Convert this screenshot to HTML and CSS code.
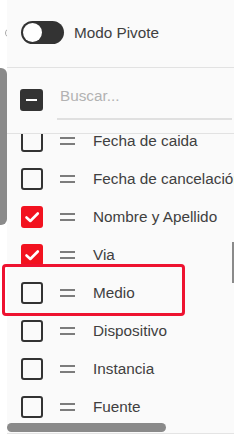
FILE: index.html
```html
<!DOCTYPE html>
<html lang="es">
<head>
<meta charset="utf-8">
<title>Columnas</title>
<link rel="stylesheet" href="styles.css">
</head>
<body>
<div class="rail">
  <div class="rail-dot"></div>
  <div class="rail-thumb"></div>
</div>
<div class="panel">
  <div class="toggle-row">
    <div class="toggle"><div class="knob"></div></div>
    <span class="toggle-label">Modo Pivote</span>
  </div>
  <div class="search-row">
    <div class="cb cb-ind"><div class="dash"></div></div>
    <div class="search">Buscar...</div>
  </div>
  <div class="list">
    <div class="list-inner">
      <div class="row"><div class="cb"></div><div class="handle"></div><span class="label">Fecha de caida</span></div>
      <div class="row"><div class="cb"></div><div class="handle"></div><span class="label">Fecha de cancelación</span></div>
      <div class="row"><div class="cb cb-on"><svg viewBox="0 0 22 22" width="22" height="22"><path d="M5.5 11.5 L9.3 15 L16.8 7.5" fill="none" stroke="#fff" stroke-width="2.6" stroke-linecap="round" stroke-linejoin="round"/></svg></div><div class="handle"></div><span class="label">Nombre y Apellido</span></div>
      <div class="row"><div class="cb cb-on"><svg viewBox="0 0 22 22" width="22" height="22"><path d="M5.5 11.5 L9.3 15 L16.8 7.5" fill="none" stroke="#fff" stroke-width="2.6" stroke-linecap="round" stroke-linejoin="round"/></svg></div><div class="handle"></div><span class="label">Via</span></div>
      <div class="row"><div class="cb"></div><div class="handle"></div><span class="label">Medio</span></div>
      <div class="row"><div class="cb"></div><div class="handle"></div><span class="label">Dispositivo</span></div>
      <div class="row"><div class="cb"></div><div class="handle"></div><span class="label">Instancia</span></div>
      <div class="row"><div class="cb"></div><div class="handle"></div><span class="label">Fuente</span></div>
    </div>
    <div class="vscroll"></div>
    <div class="hscroll"></div>
  </div>
</div>
<div class="highlight"></div>
</body>
</html>
```
FILE: styles.css
```css
html, body {
  margin: 0;
  padding: 0;
}
body {
  width: 234px;
  height: 438px;
  background: #ffffff;
  display: flex;
  overflow: hidden;
  position: relative;
  font-family: "Liberation Sans", Arial, sans-serif;
  font-size: 15.3px;
  color: #404040;
}
.rail {
  width: 7px;
  flex: none;
  overflow: hidden;
  display: flex;
  flex-direction: column;
}
.rail-dot {
  flex: none;
  margin-top: 28px;
  margin-left: 5px;
  width: 10px;
  height: 10px;
  box-sizing: border-box;
  border: 1.5px solid #a8a8a8;
  border-radius: 50%;
}
.rail-thumb {
  flex: none;
  margin-top: 30px;
  width: 7px;
  height: 157px;
  background: #8a8a8a;
  border-radius: 0 6px 6px 0;
}
.panel {
  flex: none;
  width: 227px;
  height: 434px;
  box-sizing: border-box;
  background: #fafafa;
  border-bottom: 1px solid #e4e4e4;
  display: flex;
  flex-direction: column;
  overflow: hidden;
}
.toggle-row {
  flex: none;
  height: 68px;
  box-sizing: border-box;
  border-bottom: 1px solid #e2e2e2;
  display: flex;
  align-items: center;
  padding-left: 14px;
  padding-bottom: 2px;
}
.toggle {
  width: 43px;
  height: 23px;
  box-sizing: border-box;
  background: #333333;
  border-radius: 12px;
  padding: 2px;
  display: flex;
}
.knob {
  width: 19px;
  height: 19px;
  border-radius: 50%;
  background: #ffffff;
}
.toggle-label {
  margin-left: 10px;
  color: #404040;
}
.search-row {
  flex: none;
  height: 66px;
  box-sizing: border-box;
  border-bottom: 1px solid #e2e2e2;
  display: flex;
  align-items: flex-start;
  padding-top: 21px;
  padding-left: 13px;
}
.cb {
  flex: none;
  width: 22px;
  height: 22px;
  box-sizing: border-box;
  border: 2px solid #333333;
  border-radius: 3px;
  display: flex;
  align-items: center;
  justify-content: center;
}
.cb-ind {
  width: 23px;
  background: #333333;
}
.dash {
  width: 11px;
  height: 2.5px;
  background: #ffffff;
}
.cb-on {
  border: none;
  background: #f2121f;
}
.cb-on svg {
  display: block;
}
.search {
  flex: 1;
  margin-left: 14px;
  margin-right: 2px;
  height: 34px;
  box-sizing: border-box;
  border-bottom: 2px solid #e0e0e0;
  padding-left: 3px;
  margin-top: -3px;
  line-height: 20px;
  color: #b2b2b2;
}
.list {
  flex: 1;
  position: relative;
  overflow: hidden;
}
.list-inner {
  margin-top: -12px;
}
.row {
  height: 38px;
  display: flex;
  align-items: center;
  padding-left: 14px;
  white-space: nowrap;
}
.handle {
  flex: none;
  margin-left: 17px;
  width: 15px;
  height: 8px;
  box-sizing: border-box;
  border-top: 2px solid #7c7c7c;
  border-bottom: 2px solid #7c7c7c;
}
.label {
  margin-left: 18px;
  color: #404040;
}
.vscroll {
  position: absolute;
  right: 0;
  top: 108px;
  width: 2px;
  height: 41px;
  background: #8a8a8a;
}
.hscroll {
  position: absolute;
  left: 0;
  bottom: 1px;
  width: 159px;
  height: 9px;
  border-radius: 5px;
  background: #8a8a8a;
}
.highlight {
  position: absolute;
  left: 2px;
  top: 264px;
  width: 183px;
  height: 52px;
  box-sizing: border-box;
  border: 3px solid #ee1230;
  border-radius: 4px;
}
```
